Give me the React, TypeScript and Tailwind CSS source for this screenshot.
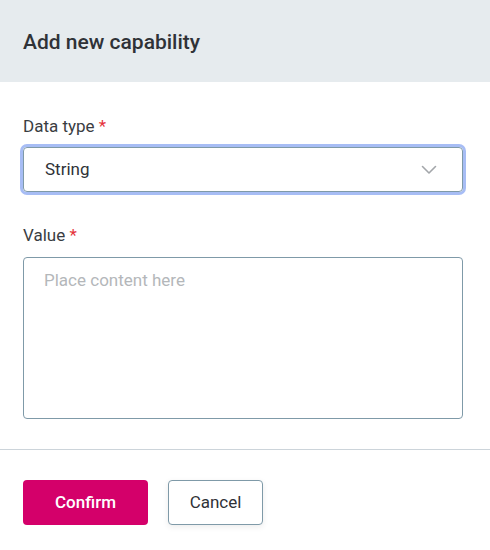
import React from "react";

export default function App() {
  return (
    <div className="w-[490px] h-[550px] bg-white flex flex-col" style={{ fontFamily: "Roboto, 'Noto Sans', sans-serif" }}>
      <div className="h-[82px] bg-[#e6ebee] flex items-center px-[23px] shrink-0">
        <h1 className="text-[21px] font-medium text-[#2f3237] leading-[24px] pt-[1px]">Add new capability</h1>
      </div>
      <div className="px-[23px] pt-[34px] pb-[30px] flex flex-col">
        <label className="text-[17px] text-[#3a3d42] leading-[20px]">
          Data type <span className="text-[#e5343a]">*</span>
        </label>
        <div className="mt-[11px] w-[440px] h-[45px] rounded-[4px] border border-[#7f9aa8] ring-[3px] ring-[#a7bdf5] flex items-center justify-between pl-[21px] pr-[25px]">
          <span className="text-[17px] text-[#2f3237]">String</span>
          <svg width="16" height="10" viewBox="0 0 16 10" fill="none">
            <path d="M1.5 1.5 L8 8 L14.5 1.5" stroke="#a3a6aa" strokeWidth="1.6" strokeLinecap="round" strokeLinejoin="round" />
          </svg>
        </div>
        <label className="mt-[33px] text-[17px] text-[#3a3d42] leading-[20px]">
          Value <span className="text-[#e5343a]">*</span>
        </label>
        <div className="mt-[12px] w-[440px] h-[162px] rounded-[4px] border border-[#7f9aa8] px-[20px] pt-[10px]">
          <span className="text-[17px] text-[#b4b7ba]">Place content here</span>
        </div>
      </div>
      <div className="border-t border-[#ccd4da] px-[23px] pt-[30px] flex gap-[20px]">
        <button className="h-[45px] w-[125px] rounded-[4px] bg-[#d4006a] text-white text-[17px] font-medium">Confirm</button>
        <button className="h-[45px] w-[95px] rounded-[4px] border border-[#7f9aa8] bg-white text-[#2f3237] text-[17px] font-normal shadow-[0_2px_6px_rgba(0,0,0,0.08)]">Cancel</button>
      </div>
    </div>
  );
}
